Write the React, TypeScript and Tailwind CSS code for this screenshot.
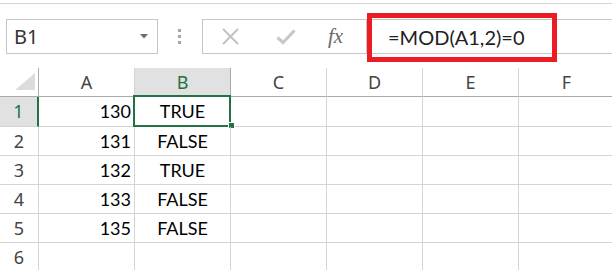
import React from 'react';

const COLS = ['A', 'B', 'C', 'D', 'E', 'F'];
const ROWS = [
  { n: 1, a: '130', b: 'TRUE', h: 'h-[30px]' },
  { n: 2, a: '131', b: 'FALSE', h: 'h-[29px]' },
  { n: 3, a: '132', b: 'TRUE', h: 'h-[29px]' },
  { n: 4, a: '133', b: 'FALSE', h: 'h-[29px]' },
  { n: 5, a: '135', b: 'FALSE', h: 'h-[29px]' },
  { n: 6, a: '', b: '', h: 'h-[29px]' }];

const ui = { fontFamily: '"Noto Sans", "Open Sans", sans-serif' };
const cellFont = { fontFamily: 'Lato, "Liberation Sans", sans-serif' };

function FormulaBar() {
  return (
    <div className="relative h-[68px] w-full bg-white">
      <div className="h-[3px]" />
      <div className="border-t border-[#d5d5d5]" />
      <div className="mt-[15px] flex items-center">
        {/* name box */}
        <div className="ml-[6px] flex h-[35px] w-[152px] items-center border border-[#c6c6c6] bg-white pl-[7px] pr-[9px]">
          <span className="flex-1 text-[20px] leading-none text-[#333]" style={ui}>B1</span>
          <svg width="8" height="5" viewBox="0 0 8 5"><path d="M0 0h8L4 4.5z" fill="#6b6b6b" /></svg>
        </div>
        <div className="ml-[20px] flex w-[4px] flex-col gap-[3px]">
          <span className="h-[3px] w-[3px] bg-[#a6a6a6]" />
          <span className="h-[3px] w-[3px] bg-[#a6a6a6]" />
          <span className="h-[3px] w-[3px] bg-[#a6a6a6]" />
        </div>
        {/* formula area */}
        <div className="ml-[20px] flex h-[35px] flex-1 items-center border-y border-l border-[#c6c6c6] bg-white">
          <div className="flex w-[163px] items-center">
            <svg className="ml-[19px]" width="17" height="17" viewBox="0 0 17 17">
              <path d="M1 1l15 15M16 1L1 16" stroke="#c2c2c2" strokeWidth="2" />
            </svg>
            <svg className="ml-[37px]" width="20" height="16" viewBox="0 0 20 16">
              <path d="M1.5 8.5l5.5 5L18.5 1.5" stroke="#c9c9c9" strokeWidth="3.2" fill="none" />
            </svg>
            <span className="ml-[32px] text-[21px] italic leading-none text-[#6a6a6a]" style={{ fontFamily: '"Liberation Serif", serif' }}>fx</span>
          </div>
          <div className="h-full border-l border-[#c6c6c6] pl-[21px] flex items-center">
            <span className="text-[20px] leading-none text-[#222]" style={cellFont}>=MOD(A1,2)=0</span>
          </div>
        </div>
      </div>
      {/* highlight annotation */}
      <div className="absolute left-[367px] top-[13px] h-[49px] w-[190px] border-[5px] border-[#ed1c24]" />
    </div>
  );
}

function Grid() {
  return (
    <div className="grid grid-cols-[39px_repeat(6,96px)]">
      <div className="relative h-[29px] border-r border-b border-[#ababab] bg-white">
        <svg className="absolute left-[15px] top-[5px]" width="21" height="18" viewBox="0 0 21 18">
          <path d="M20 0V17H0z" fill="#dcdcdc" />
        </svg>
      </div>
      {COLS.map((c) =>
        <div
          key={c}
          className={`flex h-[29px] items-center justify-center border-r border-b text-[18px] ${c === 'B' ? 'bg-[#e1e1e1] text-[#217346] border-b-[#217346] border-r-[#ababab]' : 'bg-white text-[#444] border-r-[#d4d4d4] border-b-[#ababab]'}`}
          style={ui}>
          {c}
        </div>
      )}
      {ROWS.map((r) =>
        <React.Fragment key={r.n}>
          <div
            className={`flex ${r.h} items-center justify-center border-b border-r text-[18px] ${r.n === 1 ? 'bg-[#e1e1e1] text-[#217346] border-r-2 border-r-[#217346] border-b-[#d4d4d4]' : 'bg-white text-[#444] border-[#d4d4d4]'}`}
            style={ui}>
            {r.n}
          </div>
          <div className={`flex ${r.h} items-center justify-end border-b border-r border-[#d4d4d4] pr-[3px] text-[18px] text-black`} style={cellFont}>
            {r.a}
          </div>
          <div className={`relative flex ${r.h} items-center justify-center border-b border-r border-[#d4d4d4] text-[18px] text-black`} style={cellFont}>
            {r.b}
            {r.n === 1 &&
              <>
                <div className="absolute left-[-2px] top-[-2px] h-[32px] w-[98px] border-2 border-[#217346]" />
                <div className="absolute left-[93px] top-[25px] h-[7px] w-[7px] border border-white bg-[#217346]" />
              </>
            }
          </div>
          {['C', 'D', 'E', 'F'].map((c) =>
            <div key={c} className={`${r.h} border-b border-r border-[#d4d4d4]`} />
          )}
        </React.Fragment>
      )}
    </div>
  );
}

export default function App() {
  return (
    <div className="h-[270px] w-[612px] overflow-hidden bg-white">
      <FormulaBar />
      <Grid />
    </div>
  );
}
